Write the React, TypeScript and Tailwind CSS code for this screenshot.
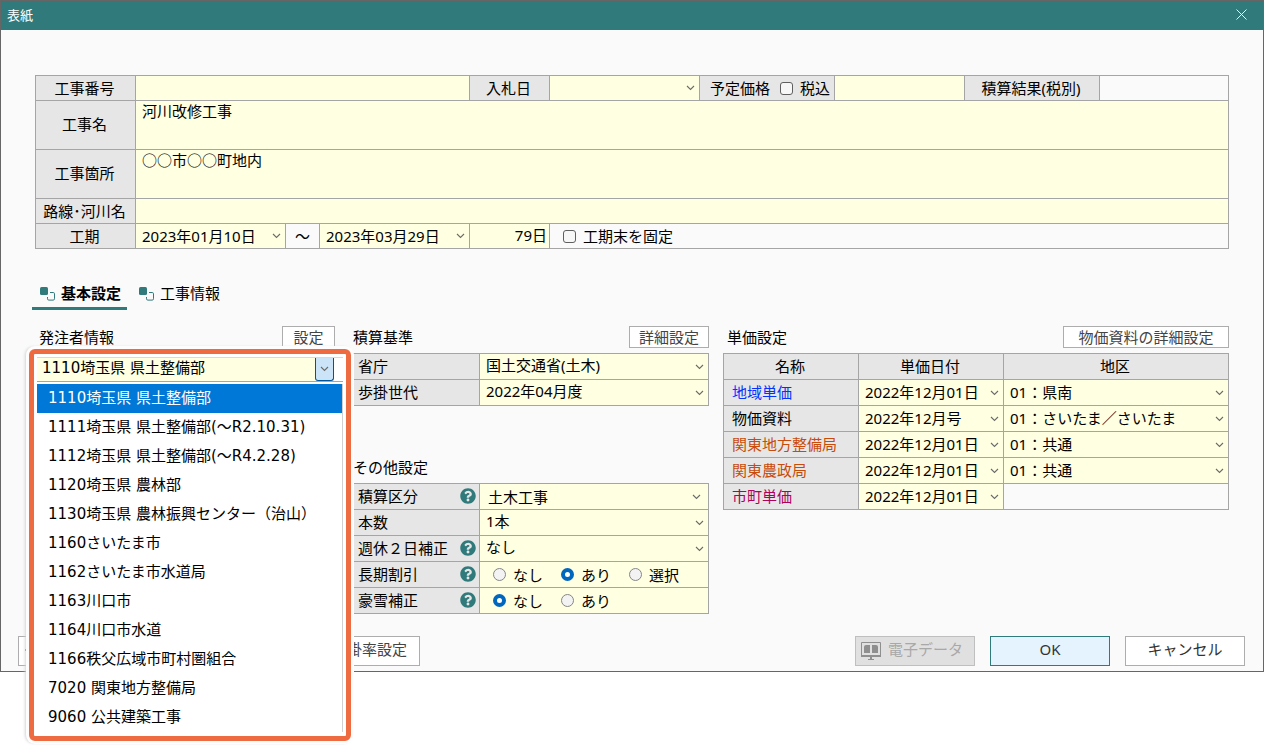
import React, { useState } from 'react';
import { clsx } from 'clsx';
import { FaQuestionCircle } from 'react-icons/fa';

const CLIENTS = [
  '1110埼玉県 県土整備部',
  '1111埼玉県 県土整備部(～R2.10.31)',
  '1112埼玉県 県土整備部(～R4.2.28)',
  '1120埼玉県 農林部',
  '1130埼玉県 農林振興センター（治山）',
  '1160さいたま市',
  '1162さいたま市水道局',
  '1163川口市',
  '1164川口市水道',
  '1166秩父広域市町村圏組合',
  '7020 関東地方整備局',
  '9060 公共建築工事',
];

const PRICES = [
  { name: '地域単価', color: 'text-[#0433ff]', date: '2022年12月01日', area: '01：県南' },
  { name: '物価資料', color: 'text-black', date: '2022年12月号', area: '01：さいたま／さいたま' },
  { name: '関東地方整備局', color: 'text-[#c84b0a]', date: '2022年12月01日', area: '01：共通' },
  { name: '関東農政局', color: 'text-[#c84b0a]', date: '2022年12月01日', area: '01：共通' },
  { name: '市町単価', color: 'text-[#b0005c]', date: '2022年12月01日', area: '' },
];

const cell = 'border-r border-b border-[#a5a5a5]';
const labelCell = 'flex shrink-0 items-center justify-center bg-[#e6e6e6]';
const inputBase = 'block h-full w-full bg-[#ffffe1] outline-none';

const Chevron = () => (
  <svg width="9" height="6" viewBox="0 0 9 6" fill="none" stroke="#6b6b6b" strokeWidth="1.1">
    <path d="M1 1l3.5 3.5L8 1" />
  </svg>
);

type SelectProps = {
  label?: string;
  id?: string;
  value: string;
  inset?: boolean;
  className?: string;
};

const Select: React.FC<SelectProps> = ({ label, id, value, inset, className }) => (
  <div className="relative h-full w-full bg-[#ffffe1]">
    <select
      id={id}
      aria-label={label}
      defaultValue={value}
      className={clsx('block h-full w-full appearance-none pr-5 outline-none', inset ? 'pl-2' : 'pl-1.5', className)}
    >
      <option value={value}>{value}</option>
    </select>
    <span className={clsx('pointer-events-none absolute inset-y-0 flex items-center', inset ? 'right-[7px]' : 'right-1')}>
      <Chevron />
    </span>
  </div>
);

type RadioGroupProps = {
  name: string;
  label: string;
  options: string[];
  initial: string;
};

const RadioGroup: React.FC<RadioGroupProps> = ({ name, label, options, initial }) => {
  const [value, setValue] = useState(initial);

  return (
    <div role="radiogroup" aria-label={label} className="flex h-full items-center gap-[18px] bg-[#ffffe1] pl-[13px]">
      {options.map((option) => (
        <label key={option} className="flex items-center gap-[7px]">
          <input
            type="radio"
            name={name}
            checked={value === option}
            onChange={() => setValue(option)}
            className="h-[13px] w-[13px] appearance-none rounded-full border border-[#868686] bg-[#f3f3f3] checked:border-4 checked:border-[#0067c0] checked:bg-white"
          />
          {option}
        </label>
      ))}
    </div>
  );
};

const Checkbox = ({ label }: { label: string }) => (
  <label className="flex items-center gap-[7px]">
    <input type="checkbox" className="h-[13px] w-[13px] appearance-none rounded-[3px] border border-[#5f5f5f] bg-[#f7f7f7] checked:bg-[#0067c0]" />
    {label}
  </label>
);

type RowProps = {
  label: string;
  htmlFor?: string;
  help?: boolean;
  children: React.ReactNode;
};

const SettingRow: React.FC<RowProps> = ({ label, htmlFor, help, children }) => (
  <div className="flex h-[26px]">
    <div className={clsx(cell, 'flex w-[130px] shrink-0 items-center justify-between bg-[#e6e6e6] pr-[3px] pb-0.5 pl-2')}>
      <label htmlFor={htmlFor}>{label}</label>
      {help && (
        <button type="button" aria-label={`${label}のヘルプ`} className="text-[#317a7c]">
          <FaQuestionCircle size={16} />
        </button>
      )}
    </div>
    <div className={clsx(cell, 'min-w-0 flex-1')}>{children}</div>
  </div>
);

type SectionHeaderProps = {
  title: string;
  action?: string;
  actionClass?: string;
};

const SectionHeader: React.FC<SectionHeaderProps> = ({ title, action, actionClass }) => (
  <div className="mb-[5px] flex h-[22px] items-center justify-between pl-1">
    <h2>{title}</h2>
    {action && (
      <button type="button" className={clsx('h-[22px] border border-[#adadad] bg-white pb-0.5 leading-5 text-[#444]', actionClass)}>
        {action}
      </button>
    )}
  </div>
);

const TabIcon = () => (
  <svg width="15" height="14" viewBox="0 0 15 14" fill="none">
    <rect x="0" y="0" width="8" height="8" rx="1.5" fill="#317a7c" />
    <path d="M10 5.5h3.2a1.3 1.3 0 0 1 1.3 1.3v5a1.3 1.3 0 0 1-1.3 1.3h-4.4a1.3 1.3 0 0 1-1.3-1.3V10" stroke="#317a7c" />
  </svg>
);

const BookMonitorIcon = () => (
  <svg width="20" height="18" viewBox="0 0 20 18" fill="none">
    <path d="M.5 .5h19v13.5H.5z" stroke="#8f8f8f" />
    <path d="M0 13h20v2H0zM9 15h2v2H9zM7 17h6v1H7z" fill="#8f8f8f" />
    <path d="M3 11V5a2 2 0 0 1 2-2h4v8zM11 11V3h4a2 2 0 0 1 2 2v6z" fill="#8f8f8f" />
  </svg>
);

const ProjectForm = () => (
  <div className="border-t border-l border-[#a5a5a5]">
    <div className="flex h-[25px]">
      <label htmlFor="number" className={clsx(cell, labelCell, 'w-[100px] pr-0.5')}>工事番号</label>
      <div className={clsx(cell, 'w-[334px]')}>
        <input id="number" className={clsx(inputBase, 'px-1.5')} />
      </div>
      <label htmlFor="bid" className={clsx(cell, labelCell, 'w-20 pr-0.5')}>入札日</label>
      <div className={clsx(cell, 'w-[150px]')}>
        <Select id="bid" value="" />
      </div>
      <div className={clsx(cell, labelCell, 'w-[135px] gap-2.5 pl-1.5')}>
        <label htmlFor="price">予定価格</label>
        <Checkbox label="税込" />
      </div>
      <div className={clsx(cell, 'w-[130px]')}>
        <input id="price" className={clsx(inputBase, 'px-1.5')} />
      </div>
      <div className={clsx(cell, labelCell, 'w-[135px] pr-0.5')}>積算結果(税別)</div>
      <output className={clsx(cell, 'flex-1')} />
    </div>
    <div className="flex h-[49px]">
      <label htmlFor="title" className={clsx(cell, labelCell, 'w-[100px] pr-0.5 pb-0.5')}>工事名</label>
      <div className={clsx(cell, 'flex-1')}>
        <textarea id="title" defaultValue="河川改修工事" className={clsx(inputBase, 'resize-none px-1.5 leading-5')} />
      </div>
    </div>
    <div className="flex h-[49px]">
      <label htmlFor="place" className={clsx(cell, labelCell, 'w-[100px] pr-0.5 pb-0.5')}>工事箇所</label>
      <div className={clsx(cell, 'flex-1')}>
        <textarea id="place" defaultValue="○○市○○町地内" className={clsx(inputBase, 'resize-none px-1.5 leading-5')} />
      </div>
    </div>
    <div className="flex h-[25px]">
      <label htmlFor="river" className={clsx(cell, labelCell, 'w-[100px] pr-0.5')}>路線･河川名</label>
      <div className={clsx(cell, 'flex-1')}>
        <input id="river" className={clsx(inputBase, 'px-1.5')} />
      </div>
    </div>
    <div className="flex h-[25px]">
      <label htmlFor="start" className={clsx(cell, labelCell, 'w-[100px] pr-0.5')}>工期</label>
      <div className={clsx(cell, 'w-[150px]')}>
        <Select id="start" value="2023年01月10日" />
      </div>
      <div className={clsx(cell, 'flex w-[34px] items-center justify-center')}>～</div>
      <div className={clsx(cell, 'w-[150px]')}>
        <Select label="工期末" value="2023年03月29日" />
      </div>
      <div className={clsx(cell, 'w-20')}>
        <input aria-label="日数" defaultValue="79日" className={clsx(inputBase, 'pr-0.5 pb-1 text-right leading-5')} />
      </div>
      <div className={clsx(cell, 'flex flex-1 items-center pl-[13px]')}>
        <Checkbox label="工期末を固定" />
      </div>
    </div>
  </div>
);

const ClientPicker = () => {
  const [selected, setSelected] = useState(CLIENTS[0]);

  return (
    <div className="absolute top-[23px] -left-1.5 z-10 w-[322px] rounded-md border-[5px] border-[#ee6a41] bg-white px-[3px] pt-[3px] pb-1 font-['DejaVu_Sans','Noto_Sans_CJK_JP',sans-serif] shadow-[0_0_0_3px_#fdfdfd,-2px_0_3px_2px_#d4d4d4]">
      <div className="mb-0.5 flex h-[25px] border-t border-b border-t-[#d9d9d9] border-b-[#a5a5a5]">
        <input
          role="combobox"
          aria-label="発注者情報"
          aria-expanded="true"
          aria-controls="clients"
          readOnly
          value={selected}
          className="min-w-0 flex-1 bg-[#ffffe1] pb-1 pl-[5px] leading-5 outline-none"
        />
        <button
          type="button"
          aria-label="開く"
          className="mr-[9px] flex w-[19px] items-center justify-center rounded-b-[3px] border border-t-0 border-[#005499] bg-[#cce4f7]"
        >
          <Chevron />
        </button>
      </div>
      <ul id="clients" role="listbox" className="border-r border-[#d0d0d0]">
        {CLIENTS.map((client) => (
          <li
            key={client}
            role="option"
            aria-selected={client === selected}
            onClick={() => setSelected(client)}
            className={clsx(
              'flex h-[29px] items-center pb-0.5 pl-[11px] whitespace-nowrap',
              client === selected && 'bg-[#0078d7] text-white'
            )}
          >
            {client}
          </li>
        ))}
      </ul>
    </div>
  );
};

const PriceTable = () => (
  <table className="w-full table-fixed border-separate border-spacing-0 border-t border-l border-[#a5a5a5]">
    <thead>
      <tr className="h-[26px] bg-[#e6e6e6]">
        <th className={clsx(cell, 'w-[135px] p-0 pr-0.5 pb-0.5 font-normal')}>名称</th>
        <th className={clsx(cell, 'w-[145px] p-0 pr-0.5 pb-0.5 font-normal')}>単価日付</th>
        <th className={clsx(cell, 'p-0 pr-0.5 pb-0.5 font-normal')}>地区</th>
      </tr>
    </thead>
    <tbody>
      {PRICES.map((price) => (
        <tr key={price.name}>
          <th className={clsx(cell, price.color, 'bg-[#e6e6e6] p-0 pb-0.5 pl-2 text-left font-normal')}>{price.name}</th>
          <td className={clsx(cell, 'p-0')}>
            <div className="h-[25px]">
              <Select label={`${price.name} 単価日付`} value={price.date} className="pb-0.5" />
            </div>
          </td>
          <td className={clsx(cell, 'p-0')}>
            {price.area && (
              <div className="h-[25px]">
                <Select label={`${price.name} 地区`} value={price.area} className="pb-0.5" />
              </div>
            )}
          </td>
        </tr>
      ))}
    </tbody>
  </table>
);

const App = () => {
  const [tab, setTab] = useState('基本設定');

  return (
    <div className="min-h-screen bg-white font-['Noto_Sans','Noto_Sans_CJK_JP',sans-serif] text-[15px] leading-[22px] text-black">
      <div className="border border-[#666] bg-[#fafafa]">
        <header className="flex h-[29px] items-center justify-between bg-[#317a7c] pr-4 pb-0.5 pl-1.5 text-white">
          <h1 className="text-[13px]">表紙</h1>
          <button type="button" aria-label="閉じる">
            <svg width="11" height="11" viewBox="0 0 11 11" stroke="currentColor" strokeWidth="0.9">
              <path d="M.5 .5l10 10M10.5 .5l-10 10" />
            </svg>
          </button>
        </header>

        <main className="px-[34px] pt-[45px]">
          <ProjectForm />

          <div role="tablist" className="mt-[31px] -ml-[3px] flex gap-1">
            {['基本設定', '工事情報'].map((name) => (
              <button
                key={name}
                type="button"
                role="tab"
                aria-selected={tab === name}
                onClick={() => setTab(name)}
                className={clsx(
                  'flex h-[30px] items-center gap-1.5 border-b-[3px] pr-1.5 pl-2',
                  tab === name ? 'border-[#317a7c] font-bold' : 'border-transparent'
                )}
              >
                <TabIcon />
                <span className="pb-0.5">{name}</span>
              </button>
            ))}
          </div>

          <div className="mt-4 flex gap-3.5">
            <section className="relative w-[300px] shrink-0">
              <SectionHeader title="発注者情報" action="設定" actionClass="w-[53px]" />
              <ClientPicker />
            </section>

            <section className="w-[360px] shrink-0">
              <SectionHeader title="積算基準" action="詳細設定" actionClass="w-20" />
              <div className="border-t border-l border-[#a5a5a5]">
                <SettingRow label="省庁" htmlFor="ministry">
                  <Select id="ministry" value="国土交通省(土木)" className="pb-1" />
                </SettingRow>
                <SettingRow label="歩掛世代" htmlFor="generation">
                  <Select id="generation" value="2022年04月度" className="pb-1" />
                </SettingRow>
              </div>

              <div className="mt-[50px]">
                <SectionHeader title="その他設定" />
              </div>
              <div className="border-t border-l border-[#a5a5a5]">
                <SettingRow label="積算区分" htmlFor="category" help>
                  <Select id="category" value="土木工事" inset />
                </SettingRow>
                <SettingRow label="本数" htmlFor="count">
                  <Select id="count" value="1本" className="pb-1" />
                </SettingRow>
                <SettingRow label="週休２日補正" htmlFor="holiday" help>
                  <Select id="holiday" value="なし" className="pb-1" />
                </SettingRow>
                <SettingRow label="長期割引" help>
                  <RadioGroup name="discount" label="長期割引" options={['なし', 'あり', '選択']} initial="あり" />
                </SettingRow>
                <SettingRow label="豪雪補正" help>
                  <RadioGroup name="snow" label="豪雪補正" options={['なし', 'あり']} initial="なし" />
                </SettingRow>
              </div>
            </section>

            <section className="min-w-0 flex-1">
              <SectionHeader title="単価設定" action="物価資料の詳細設定" actionClass="w-[166px]" />
              <PriceTable />
            </section>
          </div>
        </main>

        <footer className="mt-[22px] flex h-[35px] items-start justify-between pr-[18px] pl-[17px]">
          <div className="flex gap-[162px]">
            <button type="button" aria-label="設定" className="flex h-[30px] w-[120px] items-center border border-[#adadad] bg-white pb-0.5 pl-1.5 text-[#317a7c]">
              <svg width="14" height="14" viewBox="0 0 14 14" stroke="currentColor" strokeWidth="2">
                <path d="M0 7h14M7 0v14" />
              </svg>
            </button>
            <button type="button" className="h-[30px] w-[120px] border border-[#adadad] bg-white pr-3 pb-1 text-right text-[#444]">
              掛率設定
            </button>
          </div>
          <div className="flex gap-[15px]">
            <button type="button" disabled className="flex h-[30px] w-[120px] items-center gap-[7px] border border-[#bfbfbf] bg-[#e0e0e0] pl-[5px] text-[#a8a8a8]">
              <BookMonitorIcon />
              <span className="pb-1">電子データ</span>
            </button>
            <button type="button" className="h-[30px] w-[120px] border border-[#317a7c] bg-[#e5f3ff] pb-1 text-[#333]">OK</button>
            <button type="button" className="h-[30px] w-[120px] border border-[#adadad] bg-white pb-1 text-[#333]">キャンセル</button>
          </div>
        </footer>
      </div>
    </div>
  );
};

export default App;
